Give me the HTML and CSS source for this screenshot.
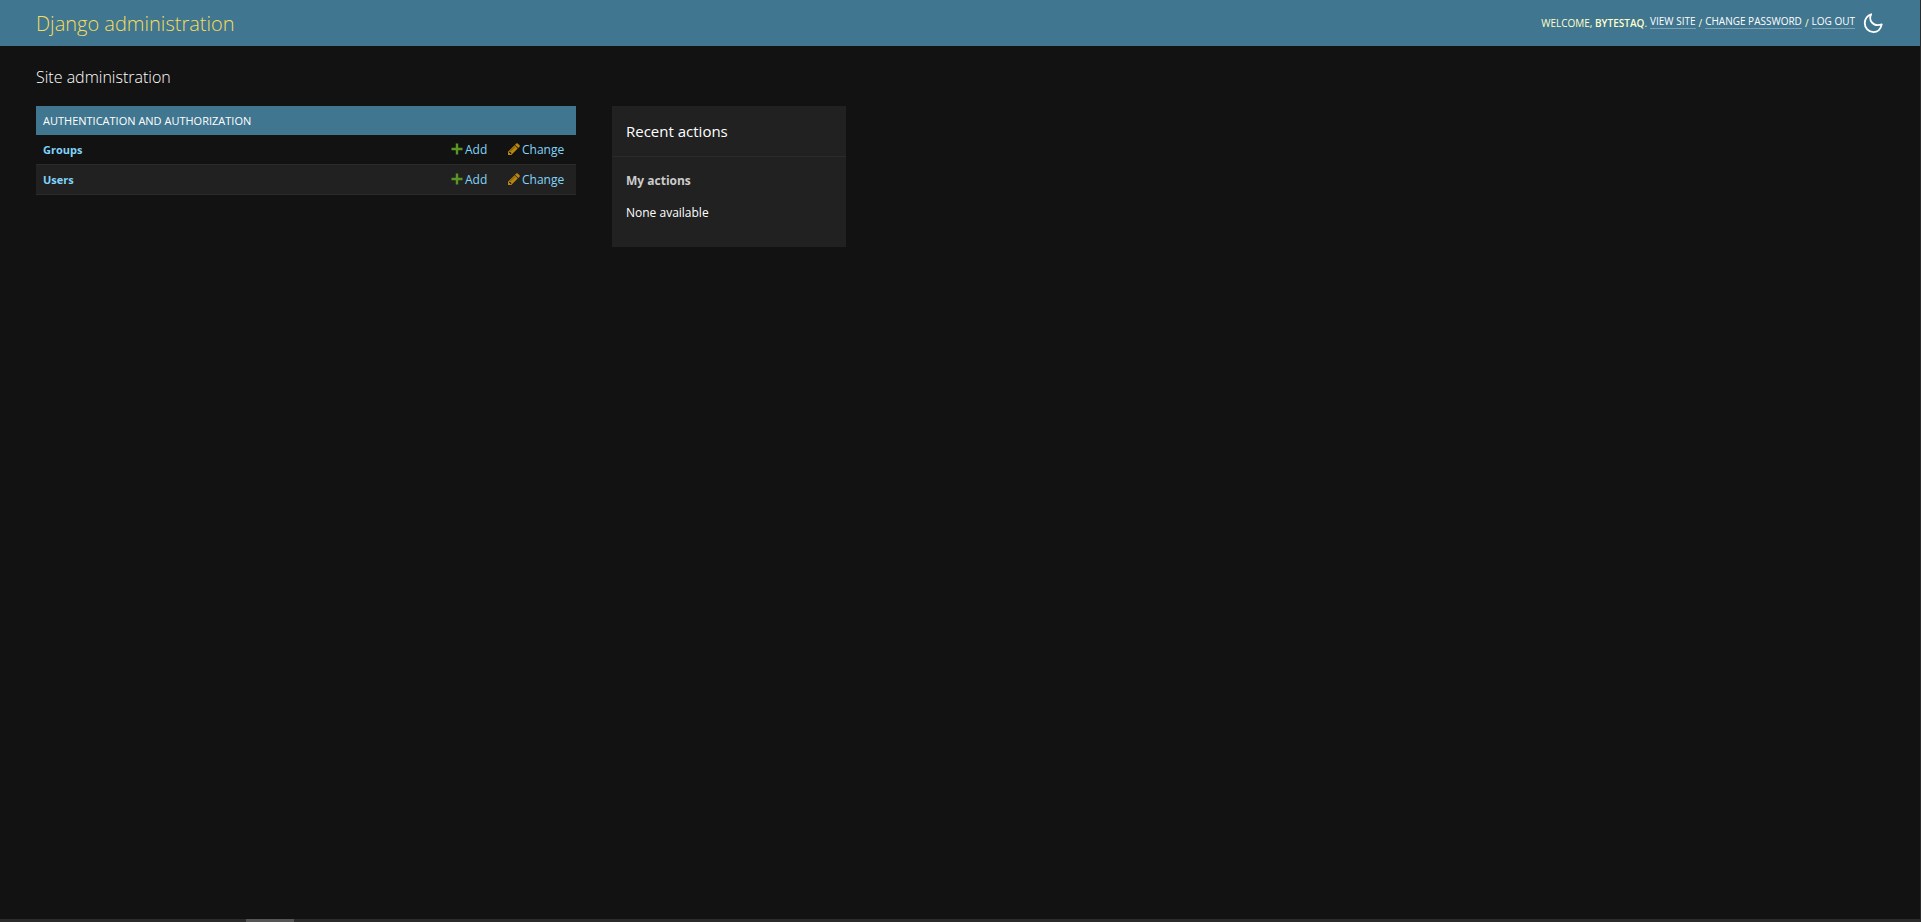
FILE: index.html
```html
<!DOCTYPE html>
<html lang="en-us">
<head>
    <meta charset="UTF-8">
    <meta name="viewport" content="width=device-width, initial-scale=1.0">
    <title>Site administration | Django site admin</title>
    <link rel="stylesheet" href="styles.css">
</head>
<body>
    <!-- icons shared by the model rows -->
    <svg class="sprite" aria-hidden="true">
        <symbol id="icon-add" viewBox="0 0 14 14">
            <path d="M5.800 1.500h2.400v4.300h4.300v2.400h-4.300v4.300h-2.400v-4.300h-4.300v-2.400h4.300z"/>
        </symbol>
        <symbol id="icon-change" viewBox="0 0 1792 1792">
            <path d="M491 1536l91-91-235-235-91 91v107h128v128h107zm523-928q0-22-22-22-10 0-17 7l-542 542q-7 7-7 17 0 22 22 22 10 0 17-7l542-542q7-7 7-17zm-54-192l416 416-832 832h-416v-416zm683 96q0 53-37 90l-166 166-416-416 166-165q36-38 90-38 53 0 91 38l235 234q37 39 37 91z"/>
        </symbol>
    </svg>

    <header class="header">
        <h1 class="site-name"><a href="#">Django administration</a></h1>
        <div class="user-tools">
            <span>Welcome, <strong>bytestaq</strong>.</span>
            <a href="#">View site</a>
            <span>/</span>
            <a href="#">Change password</a>
            <span>/</span>
            <a href="#">Log out</a>
            <button class="theme-toggle" type="button" aria-label="Toggle theme">
                <svg viewBox="0 0 24 24" aria-hidden="true">
                    <path d="M10 2.500C7 8 11 17 21.500 13.500C20.500 18.500 17 22 12.500 22C7 22 3 17.500 3 12C3 7.500 6 3.500 10 2.500Z"/>
                </svg>
            </button>
        </div>
    </header>

    <main class="content">
        <h2 class="page-title">Site administration</h2>
        <div class="columns">
            <table class="module">
                <caption><a href="#">Authentication and Authorization</a></caption>
                <tr>
                    <th scope="row"><a href="#">Groups</a></th>
                    <td class="add"><a href="#"><svg class="icon-add" aria-hidden="true"><use href="#icon-add"/></svg>Add</a></td>
                    <td class="change"><a href="#"><svg class="icon-change" aria-hidden="true"><use href="#icon-change"/></svg>Change</a></td>
                </tr>
                <tr>
                    <th scope="row"><a href="#">Users</a></th>
                    <td class="add"><a href="#"><svg class="icon-add" aria-hidden="true"><use href="#icon-add"/></svg>Add</a></td>
                    <td class="change"><a href="#"><svg class="icon-change" aria-hidden="true"><use href="#icon-change"/></svg>Change</a></td>
                </tr>
            </table>

            <aside class="recent">
                <h2>Recent actions</h2>
                <h3>My actions</h3>
                <p>None available</p>
            </aside>
        </div>
    </main>

    <div class="scroll-track"><div class="scroll-thumb"></div></div>
</body>
</html>
```

FILE: styles.css
```css
body {
    margin: 0;
    min-height: 100vh;
    box-sizing: border-box;
    display: flex;
    flex-direction: column;
    background: #121212;
    border-right: 1px solid #2b2b2b;
    color: #ffffff;
    font-family: "Segoe UI", "Open Sans", sans-serif;
    font-size: 12px;
    line-height: 20px;
}
a {
    color: #81d4fa;
    text-decoration: none;
}
h1, h2, h3, p {
    margin: 0;
}
.sprite {
    display: none;
}

/* header */
.header {
    display: flex;
    justify-content: space-between;
    align-items: center;
    height: 46px;
    padding: 0 36px;
    background: #417690;
    color: #ffffcc;
}
.site-name {
    padding-top: 2px;
    font-size: 20px;
    font-weight: 300;
    line-height: 28px;
}
.site-name a {
    color: #f5dd5d;
}
.user-tools {
    display: flex;
    align-items: center;
    gap: 3px;
    font-size: 10px;
    line-height: 12px;
    text-transform: uppercase;
}
.user-tools strong {
    font-weight: 600;
}
.user-tools a {
    padding-bottom: 1px;
    margin-bottom: 2px;
    color: #ffffff;
    border-bottom: 1px solid #7a9fb1;
}
.theme-toggle {
    display: flex;
    margin-left: 4px;
    padding: 0;
    border: none;
    background: transparent;
    cursor: pointer;
}
.theme-toggle svg {
    width: 22px;
    height: 22px;
    fill: none;
    stroke: #ffffff;
    stroke-width: 2;
    stroke-linejoin: round;
}

/* content */
.content {
    flex: 1;
    padding: 20px 36px;
}
.page-title {
    margin-bottom: 18px;
    font-size: 16px;
    font-weight: 300;
    line-height: 22px;
}
.columns {
    display: flex;
    align-items: flex-start;
    gap: 36px;
}
.module {
    flex: 0 1 540px;
    width: 540px;
    border-collapse: collapse;
}
.module caption {
    padding: 5px 7px 4px;
    background: #417690;
    font-size: 11px;
    text-align: left;
    text-transform: uppercase;
}
.module caption a {
    color: #ffffff;
}
.module tr {
    border-bottom: 1px solid #2b2b2b;
}
.module tr:nth-child(even) {
    background: #212121;
}
.module th,
.module td {
    padding: 5px 7px 4px;
    text-align: left;
    font-weight: 400;
}
.module th {
    font-size: 11px;
    font-weight: 700;
}
.module .add {
    width: 43px;
}
.module .change {
    width: 62px;
}
.module td a {
    display: flex;
    align-items: center;
    gap: 1px;
}
.module svg {
    flex: none;
    width: 14px;
    height: 14px;
    margin-bottom: 2px;
}
.icon-add {
    fill: #5a9624;
}
.icon-change {
    fill: #b8860b;
}

/* sidebar */
.recent {
    flex: 0 1 234px;
    padding-bottom: 24px;
    background: #212121;
}
.recent h2 {
    padding: 15px 14px;
    border-bottom: 1px solid #2b2b2b;
    font-size: 15px;
    font-weight: 400;
}
.recent h3 {
    padding: 14px 14px 12px;
    color: #cccccc;
    font-size: 12px;
    font-weight: 700;
}
.recent p {
    padding: 0 14px;
}

/* bottom scrollbar */
.scroll-track {
    height: 3px;
    padding-left: 246px;
    background: #2b2b2b;
}
.scroll-thumb {
    width: 48px;
    height: 3px;
    background: #555555;
}
```
